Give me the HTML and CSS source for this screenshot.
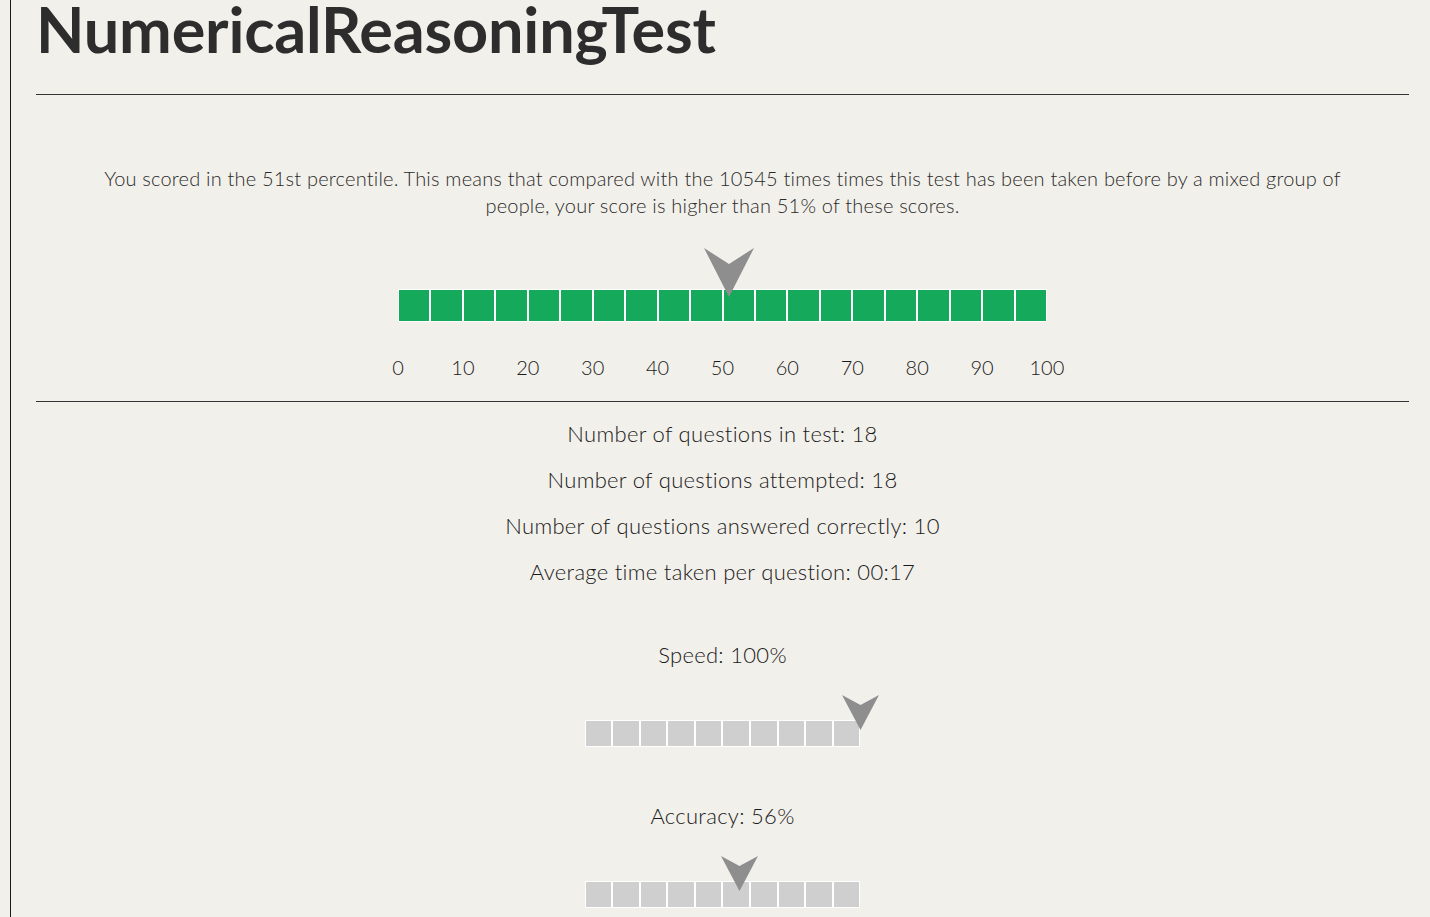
FILE: index.html
```html
<!DOCTYPE html>
<html>
<head>
<meta charset="utf-8">
<link rel="stylesheet" href="styles.css">
</head>
<body>
<div class="page">
  <h1 class="title">NumericalReasoningTest</h1>
  <hr class="rule">
  <p class="summary">You scored in the 51st percentile. This means that compared with the 10545 times times this test has been taken before by a mixed group of people, your score is higher than 51% of these scores.</p>
  <div class="pct-graph">
    <div class="bar green">
      <span class="cell"></span><span class="cell"></span><span class="cell"></span><span class="cell"></span><span class="cell"></span>
      <span class="cell"></span><span class="cell"></span><span class="cell"></span><span class="cell"></span><span class="cell"></span>
      <span class="cell"></span><span class="cell"></span><span class="cell"></span><span class="cell"></span><span class="cell"></span>
      <span class="cell"></span><span class="cell"></span><span class="cell"></span><span class="cell"></span><span class="cell"></span>
      <svg class="marker big" style="left:51%" viewBox="0 0 50 49"><polygon points="0,0 25,16 50,0 25,49" fill="#8e8e8e"/></svg>
    </div>
    <div class="scale">
      <span>0</span><span>10</span><span>20</span><span>30</span><span>40</span><span>50</span><span>60</span><span>70</span><span>80</span><span>90</span><span>100</span>
    </div>
  </div>
  <hr class="rule">
  <div class="stats">
    <p>Number of questions in test: 18</p>
    <p>Number of questions attempted: 18</p>
    <p>Number of questions answered correctly: 10</p>
    <p>Average time taken per question: 00:17</p>
  </div>
  <div class="meter">
    <p class="meter-label">Speed: 100%</p>
    <div class="bar grey">
      <span class="cell"></span><span class="cell"></span><span class="cell"></span><span class="cell"></span><span class="cell"></span>
      <span class="cell"></span><span class="cell"></span><span class="cell"></span><span class="cell"></span><span class="cell"></span>
      <svg class="marker small" style="left:100%" viewBox="0 0 37 35"><polygon points="0,0 18.5,10 37,0 18.5,35" fill="#8e8e8e"/></svg>
    </div>
  </div>
  <div class="meter">
    <p class="meter-label">Accuracy: 56%</p>
    <div class="bar grey">
      <span class="cell"></span><span class="cell"></span><span class="cell"></span><span class="cell"></span><span class="cell"></span>
      <span class="cell"></span><span class="cell"></span><span class="cell"></span><span class="cell"></span><span class="cell"></span>
      <svg class="marker small" style="left:56%" viewBox="0 0 37 35"><polygon points="0,0 18.5,10 37,0 18.5,35" fill="#8e8e8e"/></svg>
    </div>
  </div>
</div>
</body>
</html>
```
FILE: styles.css
```css
html, body {
  margin: 0;
  padding: 0;
  background: #f2f0eb;
}
body {
  font-family: Lato, "Open Sans", sans-serif;
  color: #222;
  overflow: hidden;
}
.page {
  margin-left: 10px;
  border-left: 1px solid #1c1c1c;
  padding: 0 21px 0 25px;
  min-height: 917px;
}
.title {
  margin: 0;
  font-family: Lato, sans-serif;
  font-weight: 700;
  font-size: 63px;
  line-height: 58px;
  height: 94px;
  padding-top: 0;
  color: #2d2d2d;
  letter-spacing: -0.2px;
}
.rule {
  margin: 0;
  border: 0;
  border-top: 1px solid #333;
  height: 0;
}
.summary {
  margin: 70px 0 0;
  text-align: center;
  font-weight: 300;
  font-size: 20px;
  line-height: 27px;
  letter-spacing: 0.2px;
  color: #2a2a2a;
  padding: 0 60px;
}
.pct-graph {
  width: 649px;
  margin: 0 auto;
  padding-top: 70px;
  padding-bottom: 22px;
}
.bar {
  position: relative;
  display: flex;
}
.bar .cell {
  flex: 1;
  box-sizing: border-box;
  border: 1px solid #fff;
}
.green .cell {
  height: 33px;
  background: #15a95c;
}
.grey {
  width: 276px;
  margin: 0 auto;
}
.grey .cell {
  height: 27px;
  background: #cfcfcf;
}
.marker {
  position: absolute;
  display: block;
}
.marker.big {
  width: 50px;
  height: 49px;
  top: -41px;
  margin-left: -25px;
}
.marker.small {
  width: 37px;
  height: 35px;
  top: -25px;
  margin-left: -18.5px;
}
.scale {
  display: flex;
  margin: 33px -32.45px 0;
}
.scale span {
  flex: 1;
  text-align: center;
  font-size: 20px;
  font-weight: 300;
  line-height: 24px;
  color: #1a1a1a;
}
.stats {
  padding-top: 19px;
  text-align: center;
}
.stats p {
  margin: 0 0 20px;
  font-size: 22px;
  font-weight: 300;
  letter-spacing: 0.3px;
  line-height: 26px;
  color: #1a1a1a;
}
.meter {
  text-align: center;
}
.meter-label {
  margin: 57px 0 52px;
  font-size: 22px;
  font-weight: 300;
  letter-spacing: 0.3px;
  line-height: 26px;
  color: #1a1a1a;
}
.meter + .meter .meter-label {
  margin-top: 56px;
}
```
